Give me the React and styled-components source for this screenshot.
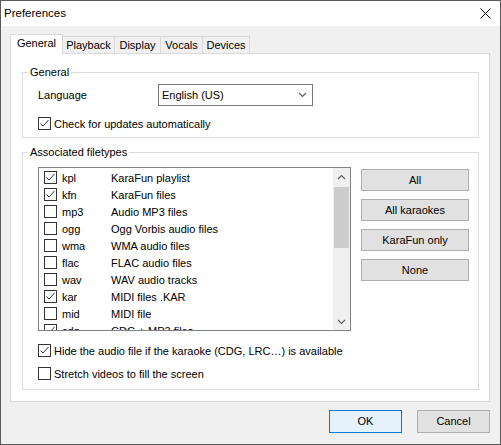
import React from "react";
import styled, { createGlobalStyle } from "styled-components";

const FONT = `"Liberation Sans", Arial, sans-serif`;

const GlobalStyle = createGlobalStyle`
  html, body { margin: 0; padding: 0; background: #ffffff; }
  body { font-family: ${FONT}; font-size: 11px; color: #000; }
  * { box-sizing: border-box; }
`;

const Window = styled.div`
  width: 501px;
  height: 445px;
  border: 1px solid #5a5a5a;
  background: #f0f0f0;
  display: flex;
  flex-direction: column;
`;

const TitleBar = styled.div`
  height: 25px;
  flex: none;
  background: #ffffff;
  display: flex;
  align-items: center;
  justify-content: space-between;
  padding: 0 9px 1px 3px;
  font-size: 11.5px;
`;

const Body = styled.div`
  flex: 1;
  display: flex;
  flex-direction: column;
  padding: 8px 10px 0 9px;
`;

const TabStrip = styled.div`
  display: flex;
  align-items: flex-end;
  height: 19px;
  position: relative;
  z-index: 1;
`;

const Tab = styled.div`
  width: ${(p) => p.$w}px;
  height: ${(p) => (p.$active ? 20 : 17)}px;
  margin-bottom: ${(p) => (p.$active ? -1 : 0)}px;
  margin-left: ${(p) => (p.$first ? 0 : -1)}px;
  background: ${(p) => (p.$active ? "#ffffff" : "#f0f0f0")};
  border: 1px solid #d9d9d9;
  border-bottom: none;
  display: flex;
  justify-content: center;
  align-items: ${(p) => (p.$active ? "flex-start" : "center")};
  padding-top: ${(p) => (p.$active ? 1 : 0)}px;
  line-height: 15px;
  position: relative;
  z-index: ${(p) => (p.$active ? 2 : 1)};
`;

const Panel = styled.div`
  height: 349px;
  background: #ffffff;
  border: 1px solid #d9d9d9;
  padding: 18px 10px 0 11px;
  display: flex;
  flex-direction: column;
`;

const Group = styled.div`
  position: relative;
  border: 1px solid #dcdcdc;
  height: ${(p) => p.$h}px;
  margin-top: ${(p) => p.$mt || 0}px;
  padding: ${(p) => p.$pt}px 0 0 15px;
  display: flex;
  flex-direction: column;
`;

const GroupLabel = styled.span`
  position: absolute;
  top: -8px;
  left: 5px;
  padding: 0 2px;
  background: #ffffff;
  line-height: 15px;
`;

const FieldRow = styled.div`
  display: flex;
  align-items: center;
  height: 22px;
`;

const FieldLabel = styled.span`
  width: 120px;
`;

const Select = styled.div`
  width: 155px;
  height: 22px;
  border: 1px solid #7a7a7a;
  background: #ffffff;
  display: flex;
  align-items: center;
  justify-content: space-between;
  padding: 0 5px 0 3px;
`;

const CheckRow = styled.label`
  display: flex;
  align-items: center;
  height: 13px;
  margin-top: ${(p) => p.$mt || 0}px;
  gap: 3px;
`;

const Box = styled.span`
  width: 13px;
  height: 13px;
  flex: none;
  border: 1px solid #333333;
  background: #ffffff;
  display: flex;
`;

const FileArea = styled.div`
  display: flex;
  align-items: flex-start;
`;

const ListBox = styled.div`
  width: 313px;
  height: 164px;
  border: 1px solid #828282;
  background: #ffffff;
  display: flex;
  overflow: hidden;
`;

const Rows = styled.div`
  flex: 1;
  padding-top: 1px;
  overflow: hidden;
`;

const Row = styled.div`
  height: 17px;
  display: flex;
  align-items: center;
  padding-left: 5px;
`;

const Ext = styled.span`
  width: 49px;
  margin-left: 5px;
`;

const ScrollBar = styled.div`
  width: 17px;
  background: #f0f0f0;
  display: flex;
  flex-direction: column;
`;

const ScrollArrow = styled.div`
  height: 17px;
  display: flex;
  align-items: center;
  justify-content: center;
`;

const Track = styled.div`
  flex: 1;
  padding: 2px 1px 0 1px;
`;

const Thumb = styled.div`
  height: 61px;
  background: #cdcdcd;
`;

const ButtonCol = styled.div`
  display: flex;
  flex-direction: column;
  gap: 8px;
  margin-left: 10px;
  padding-top: 2px;
`;

const Button = styled.button`
  font: inherit;
  color: #000;
  width: ${(p) => p.$w}px;
  height: ${(p) => p.$h}px;
  background: ${(p) => (p.$default ? "#e5f1fb" : "#e1e1e1")};
  border: 1px solid ${(p) => (p.$default ? "#0078d7" : "#adadad")};
  padding: 0;
  display: flex;
  align-items: center;
  justify-content: center;
  line-height: 15px;
`;

const Footer = styled.div`
  display: flex;
  justify-content: flex-end;
  gap: 15px;
  margin-top: 8px;
`;

const Check = ({ on }) => (
  <Box>
    {on && (
      <svg width="11" height="11" viewBox="0 0 11 11">
        <polyline points="1.5,5.5 4,8 9.5,2" fill="none" stroke="#333" strokeWidth="1" />
      </svg>
    )}
  </Box>
);

const Chevron = ({ up, color = "#606060" }) => (
  <svg width="9" height="6" viewBox="0 0 9 6">
    <polyline
      points={up ? "1,5 4.5,1.5 8,5" : "1,1 4.5,4.5 8,1"}
      fill="none"
      stroke={color}
      strokeWidth="1.2"
    />
  </svg>
);

const tabs = [
  { name: "General", w: 53 },
  { name: "Playback", w: 53 },
  { name: "Display", w: 47 },
  { name: "Vocals", w: 43 },
  { name: "Devices", w: 48 },
];

const files = [
  ["kpl", "KaraFun playlist", true],
  ["kfn", "KaraFun files", true],
  ["mp3", "Audio MP3 files", false],
  ["ogg", "Ogg Vorbis audio files", false],
  ["wma", "WMA audio files", false],
  ["flac", "FLAC audio files", false],
  ["wav", "WAV audio tracks", false],
  ["kar", "MIDI files .KAR", true],
  ["mid", "MIDI file", false],
  ["cdg", "CDG + MP3 files", true],
];

export default function App() {
  return (
    <>
      <GlobalStyle />
      <Window>
        <TitleBar>
          <span>Preferences</span>
          <svg width="11" height="11" viewBox="0 0 11 11">
            <path d="M0.5 0.5 L10.5 10.5 M10.5 0.5 L0.5 10.5" stroke="#000" strokeWidth="1" />
          </svg>
        </TitleBar>
        <Body>
          <TabStrip>
            {tabs.map((t, i) => (
              <Tab key={t.name} $w={t.w} $active={i === 0} $first={i === 0}>
                {t.name}
              </Tab>
            ))}
          </TabStrip>
          <Panel>
            <Group $h={66} $pt={11}>
              <GroupLabel>General</GroupLabel>
              <FieldRow>
                <FieldLabel>Language</FieldLabel>
                <Select>
                  <span>English (US)</span>
                  <Chevron />
                </Select>
              </FieldRow>
              <CheckRow $mt={11}>
                <Check on />
                <span>Check for updates automatically</span>
              </CheckRow>
            </Group>
            <Group $h={238} $mt={14} $pt={14}>
              <GroupLabel>Associated filetypes</GroupLabel>
              <FileArea>
                <ListBox>
                  <Rows>
                    {files.map(([ext, desc, on]) => (
                      <Row key={ext}>
                        <Check on={on} />
                        <Ext>{ext}</Ext>
                        <span>{desc}</span>
                      </Row>
                    ))}
                  </Rows>
                  <ScrollBar>
                    <ScrollArrow>
                      <Chevron up />
                    </ScrollArrow>
                    <Track>
                      <Thumb />
                    </Track>
                    <ScrollArrow>
                      <Chevron />
                    </ScrollArrow>
                  </ScrollBar>
                </ListBox>
                <ButtonCol>
                  <Button $w={108} $h={22}>All</Button>
                  <Button $w={108} $h={22}>All karaokes</Button>
                  <Button $w={108} $h={22}>KaraFun only</Button>
                  <Button $w={108} $h={22}>None</Button>
                </ButtonCol>
              </FileArea>
              <CheckRow $mt={13}>
                <Check on />
                <span>Hide the audio file if the karaoke (CDG, LRC…) is available</span>
              </CheckRow>
              <CheckRow $mt={10}>
                <Check />
                <span>Stretch videos to fill the screen</span>
              </CheckRow>
            </Group>
          </Panel>
          <Footer>
            <Button $w={73} $h={23} $default>OK</Button>
            <Button $w={73} $h={23}>Cancel</Button>
          </Footer>
        </Body>
      </Window>
    </>
  );
}
